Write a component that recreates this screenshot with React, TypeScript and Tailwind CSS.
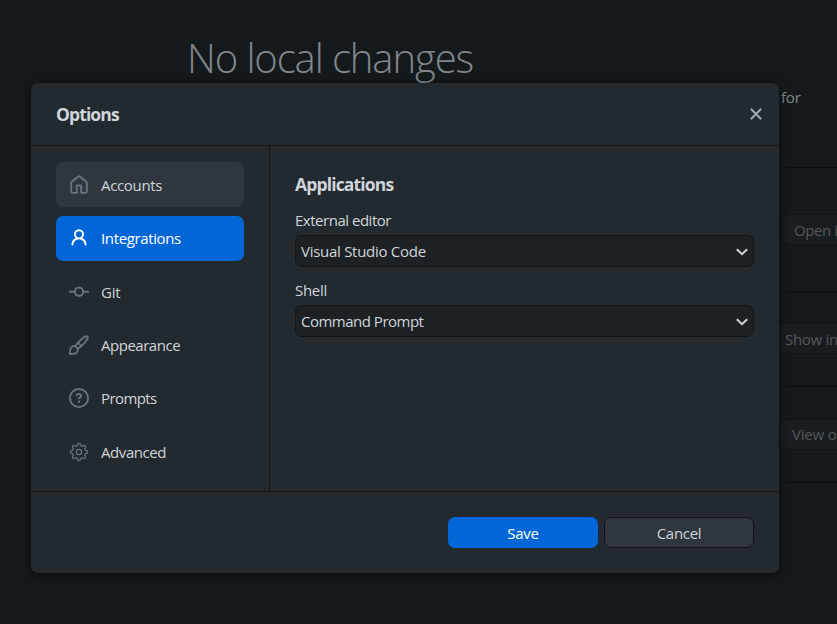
import type { ReactNode } from 'react';

const HOME = 'M6.906.664a1.749 1.749 0 0 1 2.187 0l5.25 4.2c.415.332.657.835.657 1.367v7.019A1.75 1.75 0 0 1 13.25 15h-3.5a.75.75 0 0 1-.75-.75V9H7v5.25a.75.75 0 0 1-.75.75h-3.5A1.75 1.75 0 0 1 1 13.25V6.23c0-.531.242-1.034.657-1.366l5.25-4.2Zm1.25 1.171a.25.25 0 0 0-.312 0l-5.25 4.2a.25.25 0 0 0-.094.196v7.019c0 .138.112.25.25.25H5.5V8.25a.75.75 0 0 1 .75-.75h3.5a.75.75 0 0 1 .75.75v5.25h2.75a.25.25 0 0 0 .25-.25V6.23a.25.25 0 0 0-.094-.195Z';
const PERSON = 'M10.561 8.073a6.005 6.005 0 0 1 3.432 5.142.75.75 0 1 1-1.498.07 4.5 4.5 0 0 0-8.99 0 .75.75 0 0 1-1.498-.07 6.004 6.004 0 0 1 3.431-5.142 3.999 3.999 0 1 1 5.123 0ZM10.5 5a2.5 2.5 0 1 0-5 0 2.5 2.5 0 0 0 5 0Z';
const COMMIT = 'M11.93 8.5a4.002 4.002 0 0 1-7.86 0H.75a.75.75 0 0 1 0-1.5h3.32a4.002 4.002 0 0 1 7.86 0h3.32a.75.75 0 0 1 0 1.5Zm-1.43-.75a2.5 2.5 0 1 0-5 0 2.5 2.5 0 0 0 5 0Z';
const BRUSH = 'M11.134 1.535c.7-.509 1.416-.942 2.076-1.155.649-.21 1.463-.267 2.069.34.603.601.568 1.411.368 2.07-.202.668-.624 1.39-1.125 2.096-1.011 1.424-2.496 2.987-3.775 4.249-1.098 1.084-2.132 1.839-3.04 2.3a3.744 3.744 0 0 1-1.055 3.217c-.431.431-1.065.691-1.657.861-.614.177-1.294.287-1.914.357A21.151 21.151 0 0 1 .797 16H.743l.007-.75H.749L.742 16a.75.75 0 0 1-.743-.742l.743-.008-.742.007v-.054a21.25 21.25 0 0 1 .13-2.284c.067-.647.187-1.287.358-1.914.17-.591.43-1.226.86-1.657a3.746 3.746 0 0 1 3.227-1.054c.466-.893 1.225-1.907 2.314-2.982 1.271-1.255 2.833-2.75 4.245-3.777ZM1.62 13.089c-.051.464-.086.929-.104 1.395.466-.018.932-.053 1.396-.104a10.511 10.511 0 0 0 1.668-.309c.526-.151.856-.325 1.011-.48a2.25 2.25 0 1 0-3.182-3.182c-.155.155-.329.485-.48 1.01a10.515 10.515 0 0 0-.309 1.67Zm10.396-10.34c-1.224.89-2.605 2.189-3.822 3.384l1.718 1.718c1.21-1.205 2.51-2.597 3.387-3.833.47-.662.78-1.227.912-1.662.134-.444.032-.551.009-.575h-.001V1.78c-.014-.014-.113-.113-.548.027-.432.14-.995.462-1.655.942Zm-4.832 7.266-.001.001a9.859 9.859 0 0 0 1.63-1.142L7.155 7.216a9.7 9.7 0 0 0-1.161 1.607c.482.302.889.71 1.19 1.192Z';
const QUESTION = 'M0 8a8 8 0 1 1 16 0A8 8 0 0 1 0 8Zm8-6.5a6.5 6.5 0 1 0 0 13 6.5 6.5 0 0 0 0-13ZM6.92 6.085h.001a.749.749 0 1 1-1.342-.67c.169-.339.436-.701.849-.977C6.845 4.16 7.369 4 8 4a2.756 2.756 0 0 1 1.637.525c.503.377.863.965.863 1.725 0 .448-.115.83-.329 1.15-.205.307-.47.513-.692.662-.109.072-.22.138-.313.195l-.006.004a6.24 6.24 0 0 0-.26.16.952.952 0 0 0-.276.245.75.75 0 0 1-1.248-.832c.184-.264.42-.489.692-.661.103-.067.207-.132.313-.195l.007-.004c.1-.061.182-.11.258-.161a.969.969 0 0 0 .277-.245C8.96 6.514 9 6.427 9 6.25a.612.612 0 0 0-.262-.525A1.27 1.27 0 0 0 8 5.5c-.369 0-.595.09-.74.187a1.01 1.01 0 0 0-.34.398ZM9 11a1 1 0 1 1-2 0 1 1 0 0 1 2 0Z';

// Eight soft teeth round a 16-unit box.
const GEAR = Array.from({ length: 160 }, (_, i) => {
  const a = (i / 160) * Math.PI * 2;
  const r = 6 + 0.85 * Math.tanh(2.2 * Math.cos(8 * a));
  return `${i === 0 ? 'M' : 'L'}${(8 + r * Math.sin(a)).toFixed(2)} ${(8 - r * Math.cos(a)).toFixed(2)}`;
}).join('') + 'Z';

function Icon({ path, className }: { path?: string; className: string }) {
  return (
    <svg width="20" height="20" viewBox="0 0 16 16" fill="currentColor" className={className}>
      {path ? (
        <path d={path} />
      ) : (
        <g fill="none" stroke="currentColor" strokeWidth="1" strokeLinejoin="round">
          <path d={GEAR} />
          <circle cx="8" cy="8" r="2.1" />
        </g>
      )}
    </svg>
  );
}

const tabs = [
  { label: 'Accounts', path: HOME, tracking: 'tracking-[-0.33px]', look: 'bg-[#2f363d] text-[#d1d5da]', tint: 'text-[#6a737d]' },
  { label: 'Integrations', path: PERSON, tracking: 'tracking-[-0.37px]', look: 'bg-[#0366d6] text-white', tint: 'text-white' },
  { label: 'Git', path: COMMIT, tracking: 'tracking-[-0.2px] pt-px', look: 'text-[#d1d5da]', tint: 'text-[#6a737d]' },
  { label: 'Appearance', path: BRUSH, tracking: 'tracking-[-0.48px]', look: 'text-[#d1d5da]', tint: 'text-[#6a737d]' },
  { label: 'Prompts', path: QUESTION, tracking: 'tracking-[-0.58px]', look: 'text-[#d1d5da]', tint: 'mb-px text-[#6a737d]' },
  { label: 'Advanced', path: undefined, tracking: 'tracking-[-0.42px]', look: 'text-[#d1d5da]', tint: 'text-[#6a737d]' },
];

function Select({ label, labelTracking, valueTracking, children }: { label: string; labelTracking: string; valueTracking: string; children: ReactNode }) {
  return (
    <div>
      <div className={`h-5 leading-5 ${labelTracking}`}>{label}</div>
      <div className="mt-[5px] flex h-8 items-center justify-between rounded-[7px] border border-[#141414] bg-[#1d2124] px-[5px]">
        <span className={valueTracking}>{children}</span>
        <svg width="13" height="9" viewBox="0 0 13 9" fill="none" stroke="#d1d5da" strokeWidth="2">
          <path d="M1.8 2.2 7 7.2 12.2 2.2" />
        </svg>
      </div>
    </div>
  );
}

function Backdrop() {
  return (
    <div className="flex h-full flex-col">
      <div className="h-[83px] pt-[32px] pl-[187px] text-[40px] leading-[52px] font-light tracking-[-1.1px] text-[#82868a]">No local changes</div>
      <div className="ml-[779px] flex flex-1 flex-col tracking-[-0.2px] whitespace-nowrap text-[#54585b]">
        <div className="h-[84px] pt-[4px] pl-[2px] leading-[20px] text-[#82868a]">for</div>
        <div className="h-[124px] border-t border-[#0c0e10] pt-[46px] pl-[2px]">
          <div className="h-[31px] w-[150px] rounded-[7px] border border-[#101315] bg-[#191d20] pl-[12px] leading-[31px] tracking-[-0.4px]">Open in</div>
        </div>
        <div className="h-[95px] border-t border-[#0c0e10] pt-[31px]">
          <div className="-ml-[7px] h-[31px] w-[150px] rounded-[7px] border border-[#101315] bg-[#191d20] pl-[12px] leading-[31px] tracking-[-0.3px]">Show in</div>
        </div>
        <div className="h-[96px] border-t border-[#0c0e10] pt-[32px]">
          <div className="h-[31px] w-[150px] rounded-[7px] border border-[#101315] bg-[#191d20] pl-[12px] leading-[29px]">View on</div>
        </div>
        <div className="flex-1 border-t border-[#0c0e10]" />
      </div>
    </div>
  );
}

export default function App() {
  return (
    <div className="relative h-[624px] w-[837px] overflow-hidden bg-[#14191b] font-['Open_Sans','Noto_Sans',sans-serif] text-[15px] text-[#d1d5da]">
      <Backdrop />
      <div className="absolute top-[83px] left-[31px] flex h-[490px] w-[748px] flex-col rounded-[7px] bg-[#22292f] shadow-[0_2px_8px_rgba(0,0,0,0.6)]">
        <header className="flex h-[63px] items-center justify-between border-b border-[#141414] pr-[17px] pl-[25px]">
          <h1 className="text-[17.5px] font-bold tracking-[-0.9px]">Options</h1>
          <svg width="12" height="12" viewBox="0 0 12 12" stroke="#a0a8b0" strokeWidth="2" fill="none">
            <path d="M.8.8 11.2 11.2M11.2.8.8 11.2" />
          </svg>
        </header>
        <div className="flex h-[345px]">
          <nav className="flex w-[239px] flex-col gap-[8.4px] border-r border-[#141414] pt-[16.45px] pr-[25px] pl-[25px]">
            {tabs.map(({ label, path, tracking, look, tint }) => (
              <div key={label} className={`flex h-[45px] shrink-0 items-center rounded-[7px] pl-[13px] ${look}`}>
                <Icon path={path} className={`mr-[12px] ${tint}`} />
                <span className={tracking}>{label}</span>
              </div>
            ))}
          </nav>
          <main className="flex-1 pt-[25px] pr-[25px] pl-[25px]">
            <h2 className="mb-[13px] h-[26px] text-[17.5px] leading-[26px] font-bold tracking-[-0.85px]">Applications</h2>
            <div className="flex flex-col gap-[13px]">
              <Select label="External editor" labelTracking="tracking-[-0.48px]" valueTracking="tracking-[-0.28px]">Visual Studio Code</Select>
              <Select label="Shell" labelTracking="tracking-[-0.3px]" valueTracking="tracking-[-0.5px]">Command Prompt</Select>
            </div>
          </main>
        </div>
        <footer className="flex h-[82px] justify-end gap-[6px] border-t border-[#141414] pt-[25px] pr-[25px]">
          <button className="h-[31px] w-[150px] rounded-[7px] bg-[#0366d6] pt-px tracking-[-0.3px] text-white">Save</button>
          <button className="h-[31px] w-[150px] rounded-[7px] border border-[#141414] bg-[#2f363d] pt-px tracking-[-0.3px]">Cancel</button>
        </footer>
      </div>
    </div>
  );
}
